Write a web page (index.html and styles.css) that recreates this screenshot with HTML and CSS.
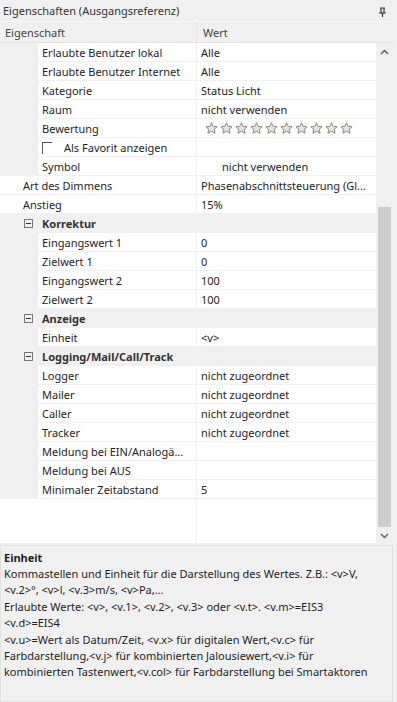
FILE: index.html
```html
<!DOCTYPE html>
<html lang="de">
<head>
    <meta charset="UTF-8">
    <title>Eigenschaften</title>
    <link rel="stylesheet" href="styles.css">
</head>
<body>

<div class="window">
    <div class="titlebar">
        <span>Eigenschaften (Ausgangsreferenz)</span>
        <svg class="pin" width="9" height="10" viewBox="0 0 9 10">
            <path d="M2 1h5M3 1v5M6 1v5M1 6h7M4.5 6v4" stroke="#333" stroke-width="1.2" fill="none"/>
        </svg>
    </div>

    <div class="grid">
        <div class="head">
            <div class="head-name">Eigenschaft</div>
            <div class="head-value">Wert</div>
        </div>

        <div class="body">
            <div class="rows">
                <div class="row sub"><div class="name">Erlaubte Benutzer lokal</div><div class="value">Alle</div></div>
                <div class="row sub"><div class="name">Erlaubte Benutzer Internet</div><div class="value">Alle</div></div>
                <div class="row sub"><div class="name">Kategorie</div><div class="value">Status Licht</div></div>
                <div class="row sub"><div class="name">Raum</div><div class="value">nicht verwenden</div></div>
                <div class="row sub">
                    <div class="name">Bewertung</div>
                    <div class="value stars" id="stars"></div>
                </div>
                <div class="row sub">
                    <div class="name fav"><span class="check"></span>Als Favorit anzeigen</div>
                    <div class="value"></div>
                </div>
                <div class="row sub"><div class="name">Symbol</div><div class="value shifted">nicht verwenden</div></div>
                <div class="row top"><div class="name">Art des Dimmens</div><div class="value">Phasenabschnittsteuerung (Gl...</div></div>
                <div class="row top"><div class="name">Anstieg</div><div class="value">15%</div></div>

                <div class="row cat"><div class="name"><span class="toggle"></span>Korrektur</div><div class="value"></div></div>
                <div class="row sub"><div class="name">Eingangswert 1</div><div class="value">0</div></div>
                <div class="row sub"><div class="name">Zielwert 1</div><div class="value">0</div></div>
                <div class="row sub"><div class="name">Eingangswert 2</div><div class="value">100</div></div>
                <div class="row sub"><div class="name">Zielwert 2</div><div class="value">100</div></div>

                <div class="row cat"><div class="name"><span class="toggle"></span>Anzeige</div><div class="value"></div></div>
                <div class="row sub selected"><div class="name">Einheit</div><div class="value">&lt;v&gt;</div></div>

                <div class="row cat"><div class="name"><span class="toggle"></span>Logging/Mail/Call/Track</div><div class="value"></div></div>
                <div class="row sub"><div class="name">Logger</div><div class="value">nicht zugeordnet</div></div>
                <div class="row sub"><div class="name">Mailer</div><div class="value">nicht zugeordnet</div></div>
                <div class="row sub"><div class="name">Caller</div><div class="value">nicht zugeordnet</div></div>
                <div class="row sub"><div class="name">Tracker</div><div class="value">nicht zugeordnet</div></div>
                <div class="row sub"><div class="name">Meldung bei EIN/Analogä...</div><div class="value"></div></div>
                <div class="row sub"><div class="name">Meldung bei AUS</div><div class="value"></div></div>
                <div class="row sub"><div class="name">Minimaler Zeitabstand</div><div class="value">5</div></div>
                <div class="filler"><div class="name"></div><div class="value"></div></div>
            </div>

            <div class="scrollbar">
                <svg class="arrow" width="9" height="6" viewBox="0 0 9 6">
                    <path d="M1 5l3.5-3.5L8 5" stroke="#606060" stroke-width="1.5" fill="none"/>
                </svg>
                <div class="track"><div class="thumb"></div></div>
                <svg class="arrow" width="9" height="6" viewBox="0 0 9 6">
                    <path d="M1 1l3.5 3.5L8 1" stroke="#606060" stroke-width="1.5" fill="none"/>
                </svg>
            </div>
        </div>
    </div>

    <div class="help">
        <div class="help-title">Einheit</div>
        <div class="help-text">Kommastellen und Einheit für die Darstellung des Wertes. Z.B.: &lt;v&gt;V,<br>&lt;v.2&gt;°, &lt;v&gt;l, &lt;v.3&gt;m/s, &lt;v&gt;Pa,...<br>Erlaubte Werte: &lt;v&gt;, &lt;v.1&gt;, &lt;v.2&gt;, &lt;v.3&gt; oder &lt;v.t&gt;. &lt;v.m&gt;=EIS3<br>&lt;v.d&gt;=EIS4<br>&lt;v.u&gt;=Wert als Datum/Zeit, &lt;v.x&gt; für digitalen Wert,&lt;v.c&gt; für<br>Farbdarstellung,&lt;v.j&gt; für kombinierten Jalousiewert,&lt;v.i&gt; für<br>kombinierten Tastenwert,&lt;v.col&gt; für Farbdarstellung bei Smartaktoren</div>
    </div>
</div>

<script>
    // Bewertung: 10 leere Sterne
    var stars = document.getElementById("stars");
    for (var i = 0; i < 10; i++) {
        stars.innerHTML += '<svg width="15" height="12" viewBox="0 0 15 12">' +
            '<path d="M7.5 0.8l1.7 3.6 3.9 0.4-2.9 2.6 0.9 3.8-3.6-2-3.6 2 0.9-3.8-2.9-2.6 3.9-0.4z" ' +
            'fill="#e6e4d8" stroke="#8c8a7c" stroke-width="1"/></svg>';
    }
</script>

</body>
</html>
```

FILE: styles.css
```css
body {
    margin: 0;
    background-color: #f0f0f0;
    font-family: "Noto Sans", "Open Sans", sans-serif;
    font-size: 11px;
    color: #1e1e1e;
}
.window {
    width: 397px;
    height: 702px;
    display: flex;
    flex-direction: column;
    overflow: hidden;
}
.titlebar {
    height: 21px;
    display: flex;
    align-items: center;
    justify-content: space-between;
    padding: 0 10px 0 3px;
    color: #333;
    box-sizing: border-box;
}
.pin {
    margin-top: 2px;
}
.grid {
    width: 393px;
    display: flex;
    flex-direction: column;
    height: 522px;
}
.head {
    height: 22px;
    display: grid;
    grid-template-columns: 197px 1fr;
    border-top: 1px solid #fafafa;
    border-bottom: 1px solid #e3e3e3;
    color: #444;
    box-sizing: border-box;
    background-color: #f0f0f0;
}
.head-name,
.head-value {
    display: flex;
    align-items: center;
}
.head-name {
    padding-left: 5px;
    border-right: 1px solid #e6e6e6;
}
.head-value {
    padding-left: 6px;
}
.body {
    flex: 1;
    display: flex;
    min-height: 0;
}
.rows {
    flex: 1;
    display: flex;
    flex-direction: column;
    background-color: #fff;
}
.row,
.filler {
    display: grid;
    grid-template-columns: 197px 1fr;
    height: 19px;
    box-sizing: border-box;
    border-bottom: 1px solid #f0f0f0;
}
.filler {
    flex: 1;
    border-bottom: none;
}
.name,
.value {
    display: flex;
    align-items: center;
    white-space: nowrap;
    overflow: hidden;
}
.name {
    border-right: 1px solid #f0f0f0;
}
.value {
    padding-left: 4px;
}
.sub .name {
    padding-left: 4px;
    border-left: 38px solid #f0f0f0;
}
.top .name {
    padding-left: 23px;
}
.cat {
    background-color: #f0f0f0;
    border-bottom-color: #f0f0f0;
}
.cat .name {
    padding-left: 24px;
    font-weight: bold;
    color: #333;
}
.toggle {
    width: 9px;
    height: 9px;
    border: 1px solid #777;
    box-sizing: border-box;
    margin-right: 9px;
    position: relative;
}
.toggle::after {
    content: "";
    position: absolute;
    left: 1px;
    right: 1px;
    top: 3px;
    height: 1px;
    background-color: #333;
}
.fav {
    padding-left: 2px;
}
.check {
    width: 10px;
    height: 12px;
    border-top: 1px solid #555;
    border-left: 1px solid #555;
    box-sizing: border-box;
    margin: 2px 12px 0 0;
}
.shifted {
    padding-left: 25px;
}
.stars {
    padding-left: 7px;
}
.stars svg {
    display: block;
}
.scrollbar {
    width: 17px;
    display: flex;
    flex-direction: column;
    align-items: center;
    background-color: #f0f0f0;
    padding: 6px 0 4px;
    box-sizing: border-box;
}
.arrow {
    flex: none;
}
.track {
    flex: 1;
    width: 100%;
    display: flex;
    flex-direction: column;
    justify-content: flex-end;
    padding: 0 2px;
    box-sizing: border-box;
}
.thumb {
    height: 320px;
    background-color: #cdcdcd;
    margin-bottom: 6px;
}
.help {
    flex: 1;
    margin: 2px 4px 0 0;
    border: 1px solid #e2e2e2;
    padding: 4px 3px;
    background-color: #f0f0f0;
}
.help-title {
    font-weight: bold;
    line-height: 16px;
}
.help-text {
    line-height: 16.4px;
    white-space: nowrap;
}
```
